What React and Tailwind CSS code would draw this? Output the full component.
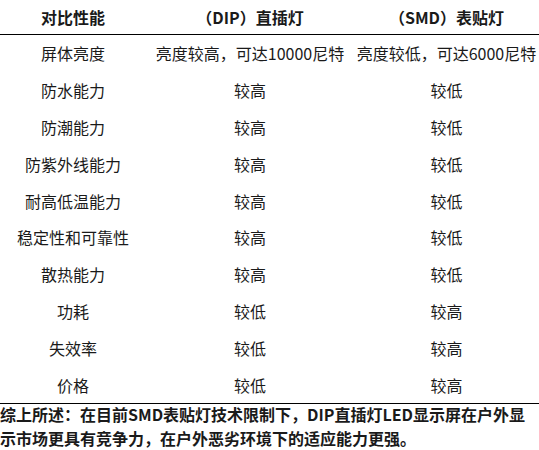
import React from 'react';

const rows = [
  ['屏体亮度', '亮度较高，可达10000尼特', '亮度较低，可达6000尼特'],
  ['防水能力', '较高', '较低'],
  ['防潮能力', '较高', '较低'],
  ['防紫外线能力', '较高', '较低'],
  ['耐高低温能力', '较高', '较低'],
  ['稳定性和可靠性', '较高', '较低'],
  ['散热能力', '较高', '较低'],
  ['功耗', '较低', '较高'],
  ['失效率', '较低', '较高'],
  ['价格', '较低', '较高'],
];

const App = () => {
  return (
    <div
      className="w-[539px] h-[450px] bg-white text-[#1a1a1a] text-[16px] overflow-hidden"
      style={{ fontFamily: '"Noto Sans CJK SC", "Noto Sans", sans-serif' }}
    >
      {/* Header */}
      <div className="grid grid-cols-[146px_208px_1fr] h-[35px] items-center font-bold border-b border-black">
        <div className="text-center">对比性能</div>
        <div className="text-center">（DIP）直插灯</div>
        <div className="text-center">（SMD）表贴灯</div>
      </div>

      {/* Rows */}
      <div className="border-b border-black">
        {rows.map(([name, dip, smd]) => (
          <div key={name} className="grid grid-cols-[146px_208px_1fr] h-[36.8px] items-center whitespace-nowrap">
            <div className="text-center">{name}</div>
            <div className="text-center">{dip}</div>
            <div className="text-center">{smd}</div>
          </div>
        ))}
      </div>

      {/* Summary */}
      <p className="font-bold leading-6 -mt-0.5 pr-1">
        综上所述：在目前SMD表贴灯技术限制下，DIP直插灯LED显示屏在户外显示市场更具有竞争力，在户外恶劣环境下的适应能力更强。
      </p>
    </div>
  );
};

export default App;
